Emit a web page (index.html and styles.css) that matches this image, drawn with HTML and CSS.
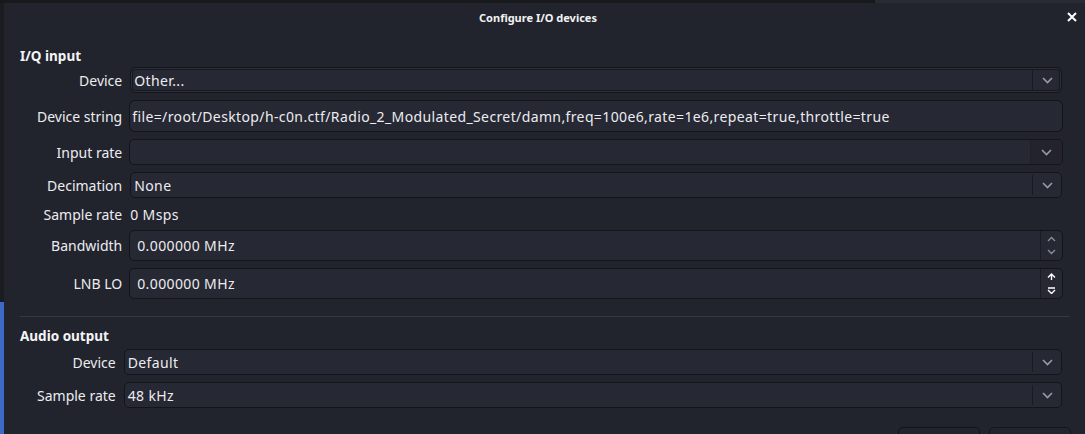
FILE: index.html
```html
<!DOCTYPE html>
<html>
<head>
<meta charset="utf-8">
<link rel="stylesheet" href="styles.css">
</head>
<body>
<div class="dialog">
  <div class="titlebar">
    <div class="title">Configure I/O devices</div>
    <div class="close"><svg width="10" height="10" viewBox="0 0 10 10"><path d="M1 1L9 9M9 1L1 9" stroke="#ffffff" stroke-width="2"/></svg></div>
  </div>
  <div class="content">
    <div class="heading">I/Q input</div>
    <div class="form iq">
      <div class="label h26">Device</div>
      <div class="field combo focus h26"><span class="val">Other...</span><span class="arrow"><svg width="11" height="7" viewBox="0 0 11 7"><path d="M1 1L5.5 5.5L10 1" stroke="#9a9ba8" stroke-width="1.6" fill="none"/></svg></span></div>

      <div class="label h32">Device string</div>
      <div class="field input h32"><span class="val">file=/root/Desktop/h-c0n.ctf/Radio_2_Modulated_Secret/damn,freq=100e6,rate=1e6,repeat=true,throttle=true</span></div>

      <div class="label h26">Input rate</div>
      <div class="field combo editable h26"><span class="val"></span><span class="arrow btn"><svg width="11" height="7" viewBox="0 0 11 7"><path d="M1 1L5.5 5.5L10 1" stroke="#9a9ba8" stroke-width="1.6" fill="none"/></svg></span></div>

      <div class="label h26">Decimation</div>
      <div class="field combo h26"><span class="val">None</span><span class="arrow"><svg width="11" height="7" viewBox="0 0 11 7"><path d="M1 1L5.5 5.5L10 1" stroke="#9a9ba8" stroke-width="1.6" fill="none"/></svg></span></div>

      <div class="label h18">Sample rate</div>
      <div class="plain h18">0 Msps</div>

      <div class="label h31">Bandwidth</div>
      <div class="field spin h31"><span class="val">0.000000 MHz</span><span class="spinbtns"><svg width="9" height="6" viewBox="0 0 9 6"><path d="M1 5L4.5 1.5L8 5" stroke="#8d8e9b" stroke-width="1.3" fill="none"/></svg><svg width="9" height="6" viewBox="0 0 9 6"><path d="M1 1L4.5 4.5L8 1" stroke="#8d8e9b" stroke-width="1.3" fill="none"/></svg></span></div>

      <div class="label h31">LNB LO</div>
      <div class="field spin h31"><span class="val">0.000000 MHz</span><span class="spinbtns"><svg width="9" height="7" viewBox="0 0 9 7"><path d="M1 4.5L4.5 1L8 4.5M4.5 1V7" stroke="#ffffff" stroke-width="1.4" fill="none"/></svg><svg width="9" height="7" viewBox="0 0 9 7"><path d="M1 1H8M1 3L4.5 6.5L8 3" stroke="#ffffff" stroke-width="1.4" fill="none"/></svg></span></div>
    </div>

    <div class="separator"></div>

    <div class="heading audio-h">Audio output</div>
    <div class="form audio">
      <div class="label h26">Device</div>
      <div class="field combo h26"><span class="val">Default</span><span class="arrow"><svg width="11" height="7" viewBox="0 0 11 7"><path d="M1 1L5.5 5.5L10 1" stroke="#9a9ba8" stroke-width="1.6" fill="none"/></svg></span></div>

      <div class="label h26">Sample rate</div>
      <div class="field combo h26"><span class="val">48 kHz</span><span class="arrow"><svg width="11" height="7" viewBox="0 0 11 7"><path d="M1 1L5.5 5.5L10 1" stroke="#9a9ba8" stroke-width="1.6" fill="none"/></svg></span></div>
    </div>

    <div class="buttons">
      <div class="button" aria-label="OK"></div>
      <div class="button focused" aria-label="Cancel"></div>
    </div>
  </div>
</div>
</body>
</html>
```

FILE: styles.css
```css
html, body {
  margin: 0;
  padding: 0;
  height: 434px;
  overflow: hidden;
}
body {
  font-family: "Noto Sans", "Open Sans", sans-serif;
  font-size: 14px;
  color: #ececf0;
  background:
    linear-gradient(to right, #18191c 0 875px, #282a34 875px) top left / 100% 3px no-repeat,
    linear-gradient(to bottom, #1b1c21 0 302px, #3f69c6 302px) top left / 4px 100% no-repeat,
    #1b1c21;
}
.dialog {
  margin: 3px 0 0 4px;
  height: 431px;
  background: #22242d;
  overflow: hidden;
}
.titlebar {
  height: 28px;
  display: flex;
  align-items: center;
  padding: 0 7px 0 6px;
}
.title {
  flex: 1;
  text-align: center;
  font-weight: bold;
  font-size: 11px;
  color: #f2f2f4;
}
.close {
  width: 12px;
  height: 12px;
  display: flex;
  align-items: center;
  justify-content: center;
}
.content {
  padding: 15px 22px 0 16px;
}
.heading {
  font-weight: bold;
  font-size: 13.5px;
  line-height: 20px;
  height: 20px;
  color: #f4f4f6;
  margin-bottom: 1px;
}
.form {
  display: grid;
  grid-template-columns: auto 1fr;
  column-gap: 7px;
  row-gap: 7px;
  padding-left: 17px;
}
.label {
  text-align: right;
  display: flex;
  align-items: center;
  justify-content: flex-end;
  white-space: nowrap;
}
.h26 { height: 26px; }
.h32 { height: 32px; }
.h31 { height: 31px; }
.h18 { height: 18px; }
.plain {
  display: flex;
  align-items: center;
  padding-left: 1px;
  letter-spacing: 0.35px;
}
.field {
  box-sizing: border-box;
  background: #262833;
  border: 1px solid #14151a;
  border-radius: 5px;
  display: flex;
  align-items: center;
  overflow: hidden;
  white-space: nowrap;
}
.field .val {
  flex: 1;
  padding-left: 3px;
  letter-spacing: 0.38px;
}
.combo { margin-left: 1px; margin-right: 1px; }
.combo .val { padding-left: 3px; }
.input { border-radius: 6px; }
.input .val { padding-left: 2px; }
.focus {
  box-shadow: inset 0 0 0 1px #2e303b, inset 0 0 0 2px #17181d;
}
.arrow {
  width: 28px;
  height: 20px;
  border-left: 1px solid #1a1b21;
  display: flex;
  align-items: center;
  justify-content: center;
}
.editable { margin: 0; }
.editable .arrow.btn {
  width: 31px;
  height: 100%;
  border-left: 1px solid #1e1f27;
  background: #22232c;
}
.spin .val { padding-left: 7px; }
.spinbtns {
  width: 21px;
  height: 100%;
  border-left: 1px solid #1b1c22;
  display: flex;
  flex-direction: column;
  align-items: center;
  justify-content: center;
  gap: 7px;
}
.separator {
  height: 1px;
  background: #353845;
  margin: 17px -7px 9px 0;
}
.audio-h { margin-bottom: 3px; }
.buttons {
  display: flex;
  justify-content: flex-end;
  gap: 9px;
  margin: 19px -8px 0 0;
}
.button {
  width: 82px;
  height: 30px;
  box-sizing: border-box;
  border: 1px solid #121318;
  border-radius: 5px;
  background: #23252e;
}
.button.focused { border-color: #15161b; }
```
